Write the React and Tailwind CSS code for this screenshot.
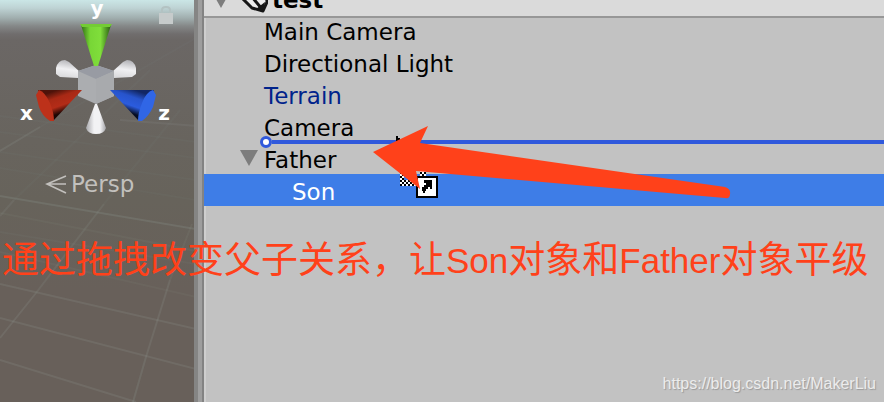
import clsx from "clsx";

const objects = [
  { id: 1, name: "Main Camera" },
  { id: 2, name: "Directional Light" },
  { id: 3, name: "Terrain", prefab: true },
  { id: 4, name: "Camera", dropAfter: true },
  { id: 5, name: "Father", open: true },
  { id: 6, name: "Son", child: true, selected: true },
];

// ground grid of the scene view: [x1, y1, x2, y2, opacity]
const gridLines = [
  [0, 196, 196, 229, 0.16],
  [0, 232, 196, 264, 0.05],
  [0, 252, 196, 297, 0.06],
  [0, 284, 196, 329, 0.14],
  [0, 318, 196, 369, 0.14],
  [0, 360, 136, 402, 0.14],
  [0, 213, 196, 251, 0.06],
  [120, 120, 196, 126, 0.1],
  [0, 116, 196, 142, 0.04],
  [0, 132, 196, 158, 0.04],
  [0, 152, 196, 180, 0.04],
  [0, 168, 196, 200, 0.04],
  [0, 151, 40, 127, 0.14],
  [40, 127, 196, 38, 0.04],
  [0, 216, 14, 200, 0.1],
  [14, 200, 150, 70, 0.04],
  [0, 338, 36, 293, 0.14],
  [36, 293, 104, 204, 0.11],
  [104, 204, 180, 110, 0.04],
  [133, 402, 146, 357, 0.15],
  [146, 357, 170, 280, 0.14],
  [170, 280, 192, 224, 0.08],
];

function SceneGrid() {
  return (
    <svg className="absolute inset-0 h-full w-full" aria-hidden="true">
      {gridLines.map(([x1, y1, x2, y2, o], i) => (
        <line
          key={i}
          x1={x1}
          y1={y1}
          x2={x2}
          y2={y2}
          stroke="#a4b4ac"
          strokeOpacity={o}
          strokeWidth="2"
        />
      ))}
    </svg>
  );
}

function AxisGizmo() {
  return (
    <div className="relative mx-5 h-36 font-['DejaVu_Sans'] text-xl leading-4 font-bold text-white">
      <svg width="160" height="144" viewBox="20 0 160 144" className="max-w-none" aria-hidden="true">
        <defs>
          <linearGradient id="green" x1="0" x2="1">
            <stop offset="0" stopColor="#2f6d14" />
            <stop offset="0.3" stopColor="#78d636" />
            <stop offset="0.65" stopColor="#80de3b" />
            <stop offset="1" stopColor="#285a12" />
          </linearGradient>
          <linearGradient id="white" x1="0" x2="1">
            <stop offset="0" stopColor="#a8a8ac" />
            <stop offset="0.4" stopColor="#f2f2f4" />
            <stop offset="0.7" stopColor="#f2f2f4" />
            <stop offset="1" stopColor="#a4a4a8" />
          </linearGradient>
          <linearGradient id="whiteSide" x1="0.5" y1="0" x2="0.3" y2="1">
            <stop offset="0" stopColor="#b4b4b8" />
            <stop offset="0.5" stopColor="#f0f0f2" />
            <stop offset="1" stopColor="#d8d8da" />
          </linearGradient>
          <linearGradient id="red" gradientUnits="userSpaceOnUse" x1="60" y1="89" x2="68" y2="112">
            <stop offset="0" stopColor="#4e130a" />
            <stop offset="0.3" stopColor="#a82915" />
            <stop offset="0.65" stopColor="#b42c18" />
            <stop offset="0.95" stopColor="#1c0603" />
          </linearGradient>
          <linearGradient id="blue" gradientUnits="userSpaceOnUse" x1="132" y1="89" x2="124" y2="112">
            <stop offset="0" stopColor="#122764" />
            <stop offset="0.3" stopColor="#2754cc" />
            <stop offset="0.65" stopColor="#2b5cde" />
            <stop offset="0.95" stopColor="#060d22" />
          </linearGradient>
        </defs>

        <path d="M56 68 Q58 60 65 60 L69 62 L80 72 L78 78 L60 77 L56 74 Z" fill="url(#whiteSide)" />
        <path d="M136 68 Q134 60 127 60 L123 62 L112 72 L114 78 L132 77 L136 74 Z" fill="url(#whiteSide)" />

        <path d="M96 65 L114 71 V96 L96 104 L78 96 V71 Z" fill="#abadb0" />
        <path d="M96 65 L114 71 L96 79 L78 71 Z" fill="#989ba3" />
        <path d="M96 79 L114 71 V96 L96 104 Z" fill="#a8aaad" />

        <path d="M81 25 H111 L98 66 H94 Z" fill="url(#green)" />
        <path d="M80 24 H112 L110 27 H82 Z" fill="#73cc34" />

        <path d="M95 104 H97 L106 128 Q104 134 96 134 Q88 134 86 128 Z" fill="url(#white)" />

        <path d="M38 90 H82 L53 121 Z" fill="url(#red)" />
        <path d="M36 95 L39 90 Q45 92 50 103 Q54 113 54 121 H50 Q42 116 39 107 Z" fill="#bd311a" />

        <path d="M154 90 H110 L139 121 Z" fill="url(#blue)" />
        <path d="M156 95 L153 90 Q146 92 142 103 Q138 113 138 121 H142 Q149 116 153 107 Z" fill="#3066e6" />
      </svg>
      <span className="absolute inset-x-0 top-0 text-center">y</span>
      <div className="absolute top-[105px] flex w-full justify-between pr-1">
        <span>x</span>
        <span>z</span>
      </div>
    </div>
  );
}

function SceneView() {
  return (
    <section
      aria-label="Scene"
      className="relative flex w-[194px] shrink-0 flex-col overflow-hidden bg-[#68605a] bg-[linear-gradient(#cae6e6_0px,#bed3d4_8px,#a0aeae_18px,#858888_26px,#706d6d_34px,#6b6765_40px,#68645e_140px,#67635b_200px,#68605a_290px)]"
    >
      <SceneGrid />
      <AxisGizmo />

      <button
        type="button"
        className="relative mt-[26px] ml-[45px] flex items-center gap-1 self-start font-['DejaVu_Sans'] text-[23px] leading-7 text-[#c2c0bd]"
      >
        <svg width="22" height="22" viewBox="0 0 22 22" fill="none" stroke="currentColor" aria-hidden="true">
          <path d="M21 3 L2 11 L21 20 M2 11 H21" strokeWidth="1.6" />
        </svg>
        Persp
      </button>

      <button
        type="button"
        aria-label="Lock rotation"
        className="absolute top-1.5 right-5 text-[#c6cbcb]"
      >
        <svg width="16" height="18" viewBox="0 0 16 18">
          <path d="M4 7 V4 Q4 1 8 1 Q12 1 12 4 V7" fill="none" stroke="#b3c2c2" strokeWidth="2" />
          <rect x="1" y="7" width="14" height="11" fill="currentColor" />
        </svg>
      </button>
    </section>
  );
}

function Foldout({ label }) {
  return (
    <button type="button" aria-label={label} className="shrink-0">
      <svg width="18" height="16" viewBox="0 0 18 16">
        <path d="M0 0 H18 L9 16 Z" fill="#7d7d7d" />
      </svg>
    </button>
  );
}

function UnityLogo() {
  return (
    <svg width="28" height="28" viewBox="0 0 28 28" aria-hidden="true">
      <path
        d="M14 1 L26 4 L27 16 L23 25 L12 22 L2 12 Z"
        fill="#ececec"
        stroke="#161616"
        strokeWidth="3"
        strokeLinejoin="round"
      />
      <path d="M12 11 L22 23 M12 11 H2 M12 11 L20 2" stroke="#161616" strokeWidth="3" />
      <path d="M16 23 L24 25 L25 16 Z" fill="#161616" />
    </svg>
  );
}

function HierarchyRow({ item }) {
  return (
    <li
      role="treeitem"
      aria-selected={!!item.selected}
      aria-expanded={item.open}
      className={clsx(
        "relative flex h-8 items-center gap-1.5",
        item.open ? "pl-9" : item.child ? "pl-[88px]" : "pl-[60px]",
        item.selected && "bg-[#3e7de7] text-white",
        item.prefab && "text-[#00238b]"
      )}
    >
      {item.open && <Foldout label={`Collapse ${item.name}`} />}
      <span className="pt-1">{item.name}</span>
      {item.dropAfter && (
        <div className="absolute inset-x-0 -bottom-1.5 z-10 flex h-3 items-center pl-14">
          <span className="size-3 rounded-full border-[3px] border-[#3059dc] bg-white" />
          <span className="h-1 flex-1 bg-[#3059dc]" />
        </div>
      )}
    </li>
  );
}

function Hierarchy() {
  return (
    <section
      aria-label="Hierarchy"
      className="min-w-0 flex-1 bg-[linear-gradient(90deg,#cfcfcf_2px,#c2c2c2_2px)] font-['DejaVu_Sans'] text-[23px] leading-7 text-black"
    >
      <header className="flex h-[18px] items-end overflow-hidden border-b-2 border-[#979797] bg-[#dadada] pl-2">
        <div className="flex pb-2">
          <Foldout label="Collapse test" />
        </div>
        <div className="flex items-end gap-1 pb-0.5 pl-2.5">
          <UnityLogo />
          <h1 className="font-bold">test</h1>
        </div>
      </header>
      <ul role="tree" className="-mt-1">
        {objects.map((item) => (
          <HierarchyRow key={item.id} item={item} />
        ))}
      </ul>
    </section>
  );
}

// drag cursor with its alias badge, and the arrow drawn across it
function DragArrow() {
  const dots = [];
  for (let y = 172; y < 186; y += 2) {
    for (let x = 400; x < 426; x += 2) {
      const corner = x < 416 && (x < 404 || y >= 180);
      const edge = x >= 420 && y < 176;
      if ((corner || edge) && ((x + y) / 2) % 2 === 0) dots.push([x, y]);
    }
  }
  return (
    <svg
      className="pointer-events-none absolute left-[370px] top-[120px] z-20"
      width="364"
      height="84"
      viewBox="370 120 364 84"
      aria-hidden="true"
    >
      <path d="M396 136 H398 V138 H400 V142 H396 Z" fill="#000" />
      <path d="M400 172 H404 V180 H416 V186 H400 Z M420 170 H426 V176 H420 Z" fill="#fff" />
      {dots.map(([x, y]) => (
        <rect key={`${x}-${y}`} x={x} y={y} width="2" height="2" fill="#000" />
      ))}
      <rect x="417" y="177" width="20" height="20" fill="#fff" stroke="#000" strokeWidth="2" />
      <path
        d="M424 180 H432 V189 H430 V187 H428 V189 H426 V191 H425 V193 H423 V191 H422 V187 H424 V185 H426 V183 H424 Z"
        fill="#000"
      />
      <path
        d="M373 152 L428 126 L420 143 L725 187 Q731 189 730 194 Q730 199 725 198 L416 171 L420 189 Z"
        fill="#ff411a"
      />
    </svg>
  );
}

export default function App() {
  return (
    <main className="relative flex min-h-screen overflow-hidden">
      <SceneView />
      <div className="w-2.5 shrink-0 border-r-2 border-l-4 border-l-[#858584] border-r-[#838383] bg-[#9e9e9e]" />
      <Hierarchy />
      <DragArrow />

      <p
        lang="zh-CN"
        className="absolute top-[231px] left-0.5 z-20 font-['Noto_Sans_CJK_SC',sans-serif] text-[37px] leading-[52px] whitespace-nowrap text-[#ff411a]"
      >
        通过拖拽改变父子关系，让
        <span className="font-['Liberation_Sans'] text-[35px]">Son</span>
        对象和
        <span className="font-['Liberation_Sans'] text-[35px]">Father</span>
        对象平级
      </p>

      <a
        href="https://blog.csdn.net/MakerLiu"
        className="absolute right-2 bottom-1.5 font-['Liberation_Sans'] text-base text-[#ececec] [text-shadow:1px_1px_1px_#9a9a9a]"
      >
        https://blog.csdn.net/MakerLiu
      </a>
    </main>
  );
}
